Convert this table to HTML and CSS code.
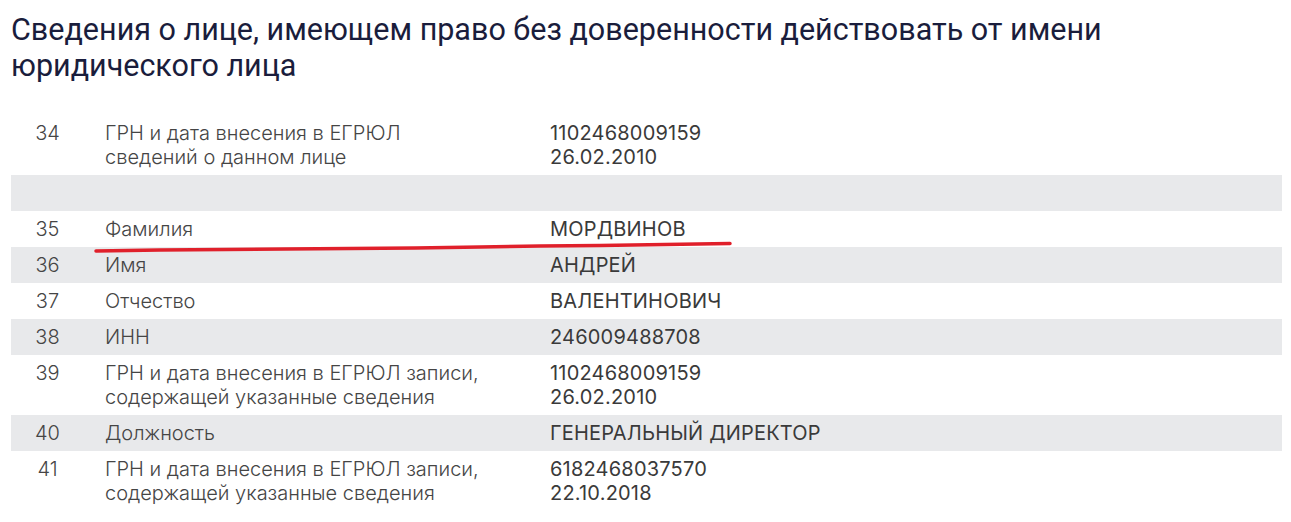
FILE: index.html
```html
<!DOCTYPE html>
<html lang="ru">
<head>
    <meta charset="UTF-8">
    <title>Сведения о лице</title>
    <link rel="stylesheet" href="styles.css">
</head>
<body>
    <div id="page">
        <h1 class="title">Сведения о лице, имеющем право без доверенности действовать от имени юридического лица</h1>

        <div class="table">
            <div class="row">
                <div class="num">34</div>
                <div class="label">ГРН и дата внесения в ЕГРЮЛ<br>сведений о данном лице</div>
                <div class="value">1102468009159<br>26.02.2010</div>
            </div>
            <div class="row gray empty"></div>
            <div class="row">
                <div class="num">35</div>
                <div class="label">Фамилия</div>
                <div class="value">МОРДВИНОВ</div>
            </div>
            <div class="row gray">
                <div class="num">36</div>
                <div class="label">Имя</div>
                <div class="value">АНДРЕЙ</div>
            </div>
            <div class="row">
                <div class="num">37</div>
                <div class="label">Отчество</div>
                <div class="value">ВАЛЕНТИНОВИЧ</div>
            </div>
            <div class="row gray">
                <div class="num">38</div>
                <div class="label">ИНН</div>
                <div class="value">246009488708</div>
            </div>
            <div class="row">
                <div class="num">39</div>
                <div class="label">ГРН и дата внесения в ЕГРЮЛ записи,<br>содержащей указанные сведения</div>
                <div class="value">1102468009159<br>26.02.2010</div>
            </div>
            <div class="row gray">
                <div class="num">40</div>
                <div class="label">Должность</div>
                <div class="value">ГЕНЕРАЛЬНЫЙ ДИРЕКТОР</div>
            </div>
            <div class="row">
                <div class="num">41</div>
                <div class="label">ГРН и дата внесения в ЕГРЮЛ записи,<br>содержащей указанные сведения</div>
                <div class="value">6182468037570<br>22.10.2018</div>
            </div>
        </div>

        <!-- пометка от руки -->
        <svg class="mark" width="1291" height="522" viewBox="0 0 1291 522">
            <path d="M96 251 L160 250 L225 249.5 L285 249 L350 248.5 L415 248 L480 247 L540 246 L600 245.5 L665 244.5 L730 243.5"
                  fill="none" stroke="#e0202b" stroke-width="3.5" stroke-linecap="round" stroke-linejoin="round"/>
        </svg>
    </div>
</body>
</html>
```

FILE: styles.css
```css
body {
    margin: 0;
    background-color: #ffffff;
    font-family: Inter, "Open Sans", sans-serif;
}

#page {
    position: relative;
    padding: 12px 9px 0 11px;
    height: 510px;
    overflow: hidden;
}

.title {
    margin: 0;
    max-width: 1120px;
    font-family: Roboto, sans-serif;
    font-weight: 400;
    font-size: 30.5px;
    line-height: 36px;
    color: #1a1d3c;
}

.table {
    margin-top: 31px;
}

.row {
    display: grid;
    grid-template-columns: 73px 466px 1fr;
    font-size: 20px;
    line-height: 24px;
    color: #454545;
    font-weight: 300;
}

.row > div {
    padding: 6px 0;
}

.row.gray {
    background-color: #e8e9eb;
}

.row.empty {
    height: 36px;
}

.num {
    text-align: center;
}

.label {
    padding-left: 21px !important;
}

.value {
    font-weight: 400;
    color: #3a3a3a;
    letter-spacing: 0.2px;
}

.mark {
    position: absolute;
    top: 0;
    left: 0;
    pointer-events: none;
}
```
